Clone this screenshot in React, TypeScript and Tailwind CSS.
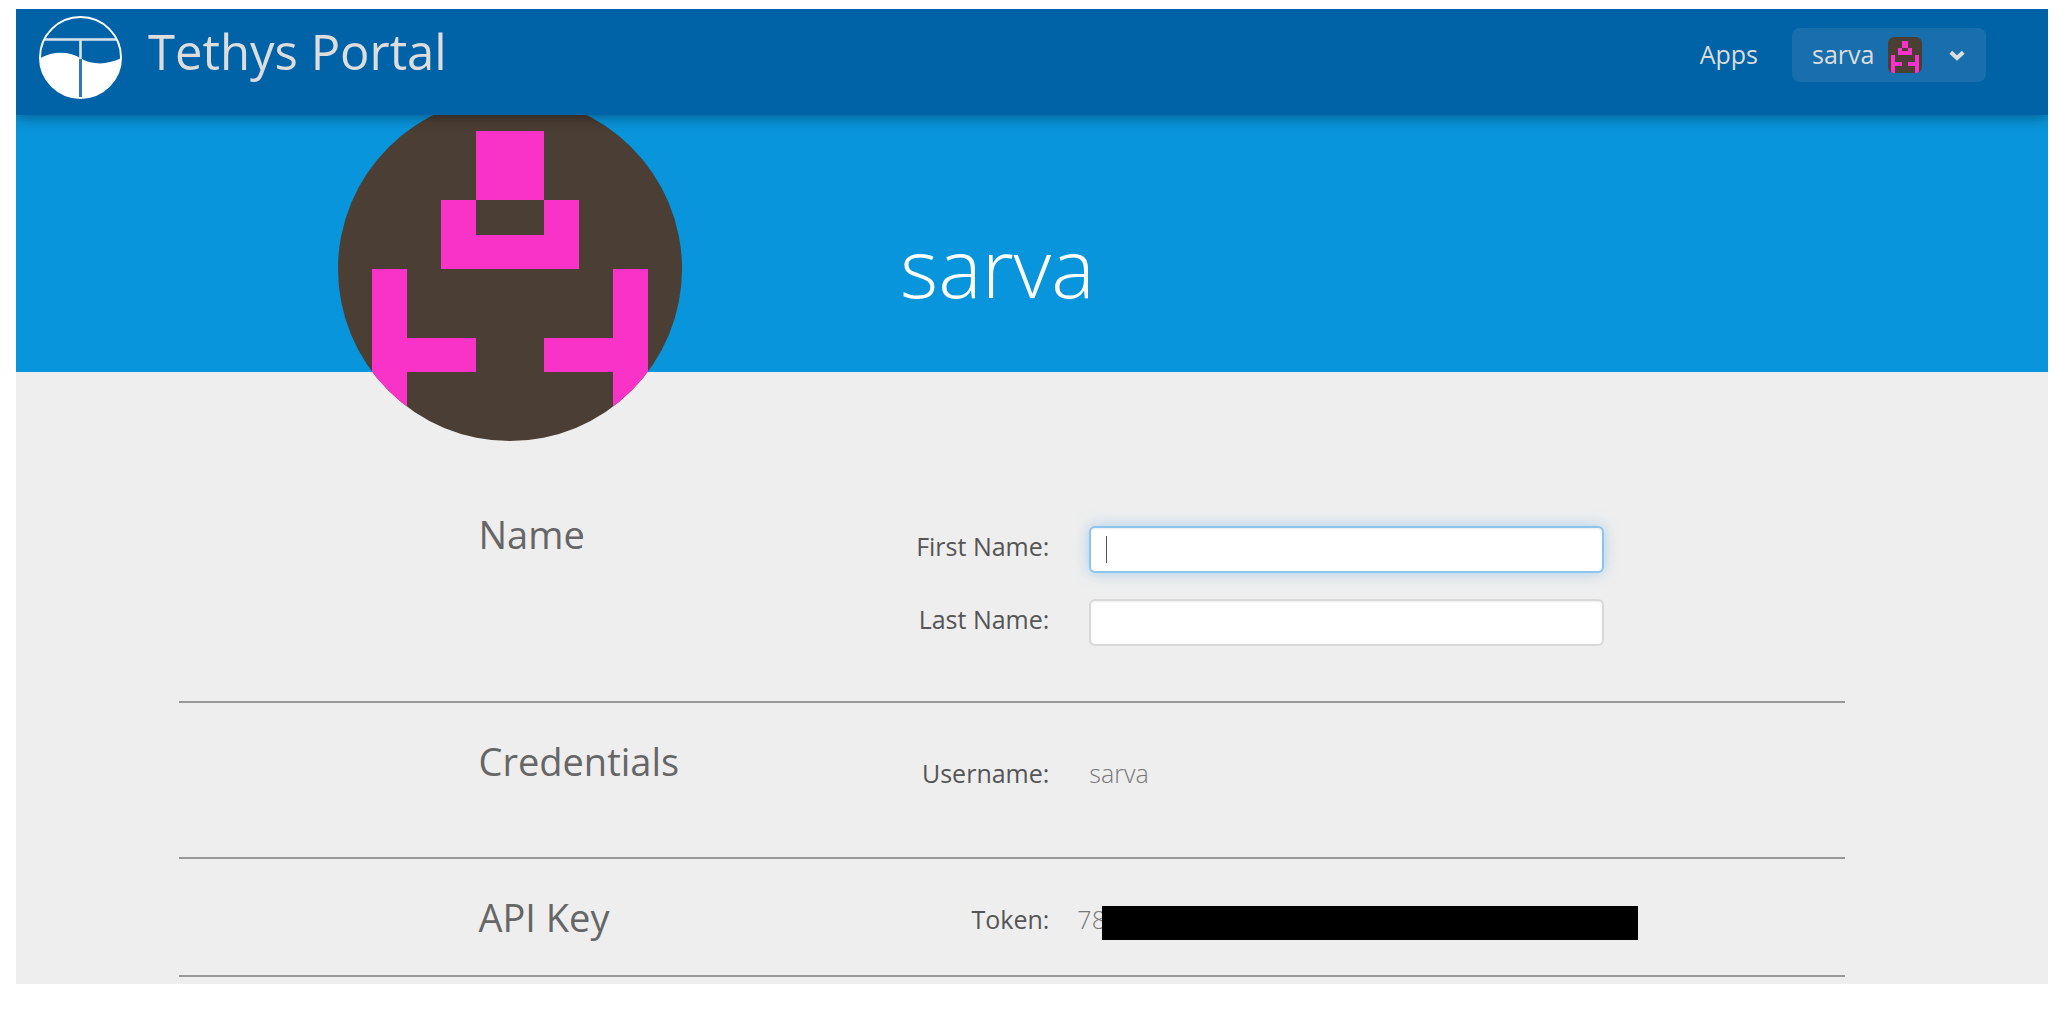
import React from 'react';

const CELLS = [
  [4, 1, 2, 2], [3, 3, 1, 2], [6, 3, 1, 2], [4, 4, 2, 1],
  [1, 5, 1, 5], [8, 5, 1, 5], [2, 7, 2, 1], [6, 7, 2, 1],
];

function Identicon({ className }: { className: string }) {
  return (
    <svg viewBox="0 0 10 10" preserveAspectRatio="none" className={className} shapeRendering="crispEdges" role="img" aria-label="sarva avatar">
      <rect width="10" height="10" fill="#4b3e34" />
      {CELLS.map(([x, y, w, h]) => (
        <rect key={`${x}-${y}`} x={x} y={y} width={w} height={h} fill="#f932c8" />
      ))}
    </svg>
  );
}

function Logo() {
  return (
    <svg viewBox="0 0 83 83" className="size-[83px]" aria-hidden="true">
      <circle cx="41.5" cy="41.5" r="40.5" fill="none" stroke="#fff" strokeWidth="2" />
      <path d="M1.5 42 C14 35 31 35 42 42.5 C54 49.5 69 48.5 81.5 42.5 A40 40 0 0 1 1.5 42Z" fill="#fff" />
      <path d="M5.5 23.5H77.5M41.5 24V44" stroke="#d6e5f1" strokeWidth="2.6" />
      <path d="M41.5 43V81" stroke="#2f7ab5" strokeWidth="3" />
    </svg>
  );
}

function Section({ title, className, children }: { title: string; className: string; children: React.ReactNode }) {
  return (
    <section className={`grid grid-cols-[18fr_17fr_65fr] border-b-2 border-[#999] ${className}`}>
      <h2 className="col-start-2 text-[38px] leading-[50px] whitespace-nowrap text-[#666]">{title}</h2>
      <div className="flex min-w-0 flex-col gap-[26px]">{children}</div>
    </section>
  );
}

const row = 'grid grid-cols-[minmax(0,121fr)_minmax(0,190fr)_minmax(0,89fr)] items-start';
const label = 'pr-10 text-right text-[25px] leading-[40px] text-[#555]';
const input = 'h-[47px] w-full rounded-md border-2 bg-white px-4 text-[25px] text-[#555] caret-transparent outline-none';

export default function App() {
  return (
    <div className="bg-white pt-[9px] pr-[18px] pb-8 pl-4 font-['Open_Sans','Noto_Sans',sans-serif]">
      <div className="bg-[#eee]">
        <header className="relative z-10 flex h-[106px] justify-between bg-[#0063a8] pr-[62px] pl-[23px] text-[#ddd] shadow-[0_2px_14px_rgba(0,0,0,0.4)] [clip-path:inset(0_0_-30px_0)]">
          <a href="#" className="flex gap-[26px] pt-[7px]">
            <Logo />
            <span className="text-[49px] leading-[70px]">Tethys Portal</span>
          </a>
          <nav className="flex items-start gap-[34px] pt-[19px] text-[25px] leading-[52px]">
            <a href="#">Apps</a>
            <button type="button" className="flex h-[54px] w-[194px] items-center rounded-lg bg-[#196fae] pl-5">
              <span className="h-[54px]">sarva</span>
              <Identicon className="ml-[14px] h-9 w-[34px] rounded-md" />
              <svg viewBox="0 0 16 11" className="ml-[27px] h-[11px] w-4" aria-hidden="true">
                <path d="M1.8 2.2 L8 8 L14.2 2.2" fill="none" stroke="#ddd" strokeWidth="4" />
              </svg>
            </button>
          </nav>
        </header>
        <div className="flex h-[257px] items-end bg-[#0995dc] pl-[322px]">
          <Identicon className="-mb-[69px] size-[344px] shrink-0 rounded-full" />
          <h1 className="mb-[50px] pl-[218px] text-[82px] leading-[112px] font-light text-white">sarva</h1>
        </div>
        <main className="pt-[137px] pr-[10%] pb-[7px] pl-[8%]">
          <Section title="Name" className="pb-[55px]">
            <div className={`${row} pt-[17px]`}>
              <label htmlFor="first" className={label}>First Name:</label>
              <div className="relative">
                <input id="first" className={`${input} border-[#8cc4ec] shadow-[inset_0_1px_2px_rgba(0,0,0,0.08),0_0_14px_rgba(102,175,233,0.5)]`} />
                <span className="absolute top-2.5 left-[17px] h-[27px] w-px bg-[#555]" />
              </div>
            </div>
            <div className={row}>
              <label htmlFor="last" className={label}>Last Name:</label>
              <input id="last" className={`${input} border-[#d8d8d8] shadow-[inset_0_1px_2px_rgba(0,0,0,0.08)]`} />
            </div>
          </Section>
          <Section title="Credentials" className="pt-[33px] pb-[64px]">
            <div className={`${row} pt-[17px]`}>
              <span className={label}>Username:</span>
              <span className="text-[25px] leading-[40px] font-light text-[#777]">sarva</span>
            </div>
          </Section>
          <Section title="API Key" className="pt-[33px] pb-[33px]">
            <div className={`${row} pt-[7px]`}>
              <span className={label}>Token:</span>
              <span className="-ml-3 flex text-[25px] leading-[40px] font-light text-[#777]">
                78
                <span className="mt-[7px] -ml-1 h-[34px] w-[536px] shrink-0 bg-black" />
              </span>
            </div>
          </Section>
        </main>
      </div>
    </div>
  );
}
